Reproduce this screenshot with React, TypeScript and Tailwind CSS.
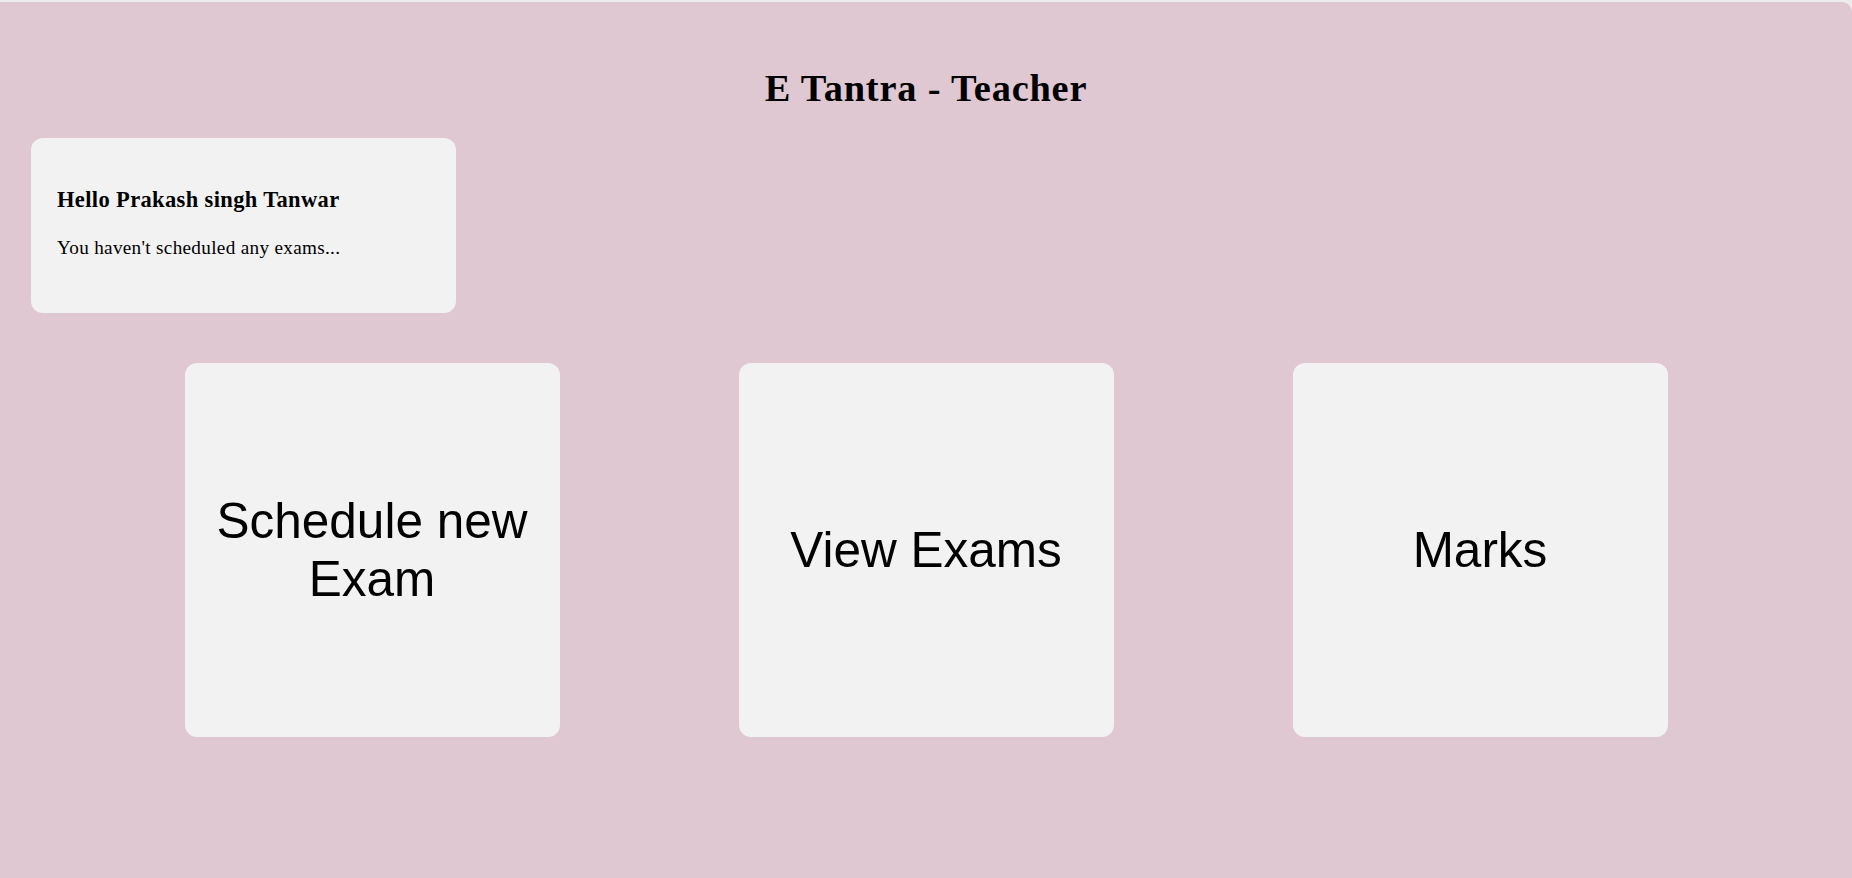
const tiles = ['Schedule new Exam', 'View Exams', 'Marks'];

export default function App() {
  return (
    <div className="min-h-screen bg-[#ececec] pt-[2px]">
      <div className="min-h-[876px] bg-[#e0c8d2] rounded-tr-[10px] pt-[65px] font-['Liberation_Serif',serif] text-black">
        <h1 className="text-center text-[38.4px] font-bold leading-[1.107] tracking-[0.8px]">E Tantra - Teacher</h1>

        <div className="mt-[28px] ml-[31px] w-[425px] rounded-[12px] bg-[#f2f2f2] px-[26px] pt-[50px] pb-[54px]">
          <h3 className="text-[22.5px] font-bold leading-[1.107] tracking-[0.36px]">Hello Prakash singh Tanwar</h3>
          <p className="mt-[25px] text-[19.2px] leading-[1.107] tracking-[0.31px]">You haven't scheduled any exams...</p>
        </div>

        <div className="mt-[50px] flex justify-center gap-[179px]">
          {tiles.map((t) => (
            <div
              key={t}
              className="flex h-[374px] w-[375px] items-center justify-center rounded-[12px] bg-[#f2f2f2] px-[30px] text-center font-['Liberation_Sans',Arial,sans-serif] text-[49.5px] leading-[1.17]"
            >
              {t}
            </div>
          ))}
        </div>
      </div>
    </div>
  );
}
